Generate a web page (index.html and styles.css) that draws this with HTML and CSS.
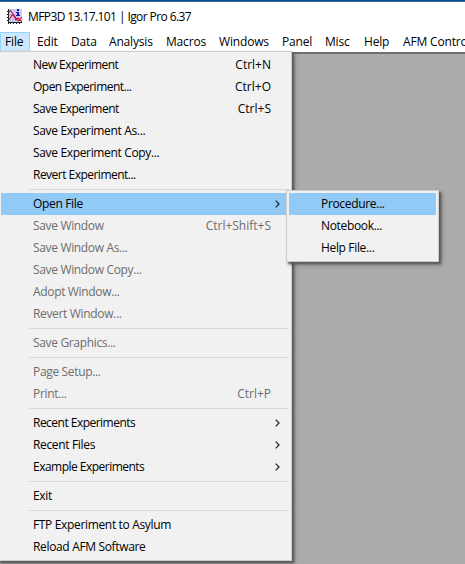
FILE: index.html
```html
<!DOCTYPE html>
<html lang="en">
<head>
<meta charset="utf-8">
<title>MFP3D 13.17.101 | Igor Pro 6.37</title>
<link rel="stylesheet" href="styles.css">
</head>
<body>
<div class="window">
  <header class="titlebar">
    <svg class="app-icon" width="16" height="16" viewBox="0 0 16 16" shape-rendering="crispEdges">
      <path fill="#c9c9f5" d="M2 0h13v13H2z"/>
      <path fill="#222" d="M1 0h1v15H1zM2 13h13v1H2zM0 2h1v1H0zM0 5h1v1H0zM0 8h1v1H0zM0 11h1v1H0zM3 14h1v1H3zM6 14h1v1H6zM9 14h1v1H9zM12 14h1v1h-1z"/>
      <path fill="none" stroke="#cc1838" stroke-width="1.1" shape-rendering="auto" d="M2 3l1.500-1.500L6 5l3 4 2.500 3L15 8M2 11l3-5 2 1 2 4 2-2 4 3.500"/>
      <path fill="#1818b0" d="M10 0h2v2h-2zM9 3h3v3h1v1H9V6h1V4H9z"/>
    </svg>
    <h1 class="title">MFP3D 13.17.101 | Igor Pro 6.37</h1>
  </header>
  <nav class="menubar">
    <span class="tab file active">File</span>
    <span class="tab edit">Edit</span>
    <span class="tab data">Data</span>
    <span class="tab analysis">Analysis</span>
    <span class="tab macros">Macros</span>
    <span class="tab windows">Windows</span>
    <span class="tab panel">Panel</span>
    <span class="tab misc">Misc</span>
    <span class="tab help">Help</span>
    <span class="tab afm">AFM Controls</span>
  </nav>
  <main class="workspace"></main>

  <div class="menu file-menu">
    <div class="item tight"><span>New Experiment</span><kbd>Ctrl+N</kbd></div>
    <div class="item tight"><span>Open Experiment...</span><kbd>Ctrl+O</kbd></div>
    <div class="item tight"><span>Save Experiment</span><kbd>Ctrl+S</kbd></div>
    <div class="item"><span>Save Experiment As...</span></div>
    <div class="item"><span>Save Experiment Copy...</span></div>
    <div class="item tight"><span>Revert Experiment...</span></div>
    <hr>
    <div class="item selected"><span>Open File</span><svg class="arrow" viewBox="0 0 5 8"><path d="M.7 .7L4 4 .7 7.300"/></svg></div>
    <div class="item disabled"><span>Save Window</span><kbd>Ctrl+Shift+S</kbd></div>
    <div class="item disabled"><span>Save Window As...</span></div>
    <div class="item disabled"><span>Save Window Copy...</span></div>
    <div class="item disabled"><span>Adopt Window...</span></div>
    <div class="item disabled"><span>Revert Window...</span></div>
    <hr>
    <div class="item disabled"><span>Save Graphics...</span></div>
    <hr>
    <div class="item disabled"><span>Page Setup...</span></div>
    <div class="item disabled"><span>Print...</span><kbd>Ctrl+P</kbd></div>
    <hr>
    <div class="item tight"><span>Recent Experiments</span><svg class="arrow" viewBox="0 0 5 8"><path d="M.7 .7L4 4 .7 7.300"/></svg></div>
    <div class="item"><span>Recent Files</span><svg class="arrow" viewBox="0 0 5 8"><path d="M.7 .7L4 4 .7 7.300"/></svg></div>
    <div class="item tight"><span>Example Experiments</span><svg class="arrow" viewBox="0 0 5 8"><path d="M.7 .7L4 4 .7 7.300"/></svg></div>
    <hr>
    <div class="item"><span>Exit</span></div>
    <hr>
    <div class="item"><span>FTP Experiment to Asylum</span></div>
    <div class="item"><span>Reload AFM Software</span></div>
  </div>

  <div class="menu submenu">
    <div class="item selected"><span>Procedure...</span></div>
    <div class="item"><span>Notebook...</span></div>
    <div class="item"><span>Help File...</span></div>
  </div>
</div>
</body>
</html>
```
FILE: styles.css
```css
* { box-sizing: border-box; }
body {
  margin: 0;
  overflow: hidden;
  font: 12px/22px "Open Sans", "Noto Sans", sans-serif;
  letter-spacing: -0.17px;
  color: #000;
}
.window {
  position: relative;
  display: flex;
  flex-direction: column;
  height: 564px;
  overflow: hidden;
  background: #fff;
  border-top: 1px solid #00508f;
  box-shadow: inset 0 1px #40698c;
}
.titlebar { display: flex; align-items: center; height: 31px; padding-left: 7px; }
.app-icon { margin-right: 5px; }
.title { margin: 0; font-size: 12px; font-weight: 400; line-height: 16px; letter-spacing: -0.59px; }
.menubar { display: flex; height: 20px; line-height: 20px; white-space: nowrap; }
.tab { flex: none; padding-left: 7px; }
.active { padding-left: 5px; background: #cce8ff; box-shadow: inset 0 0 0 1px #99d1ff; }
.file { width: 30px; }
.edit { width: 34px; }
.data { width: 38px; }
.analysis { width: 57px; }
.macros { width: 53px; }
.windows { width: 63px; }
.panel { width: 43px; }
.misc { width: 39px; }
.help { width: 39px; }
.workspace { flex: 1; background: #ababab; border-top: 2px solid #707070; }
.menu {
  position: absolute;
  background: #f1f1f1;
  border: 1px solid #ccc;
  padding: 2px;
  box-shadow: 2px 2px 2px #585858, 3px 3px 4px rgba(0, 0, 0, .25);
}
.file-menu { left: -2px; top: 50px; width: 294px; height: 510px; }
.submenu { left: 286px; top: 189px; width: 153px; height: 72px; }
.item { display: flex; align-items: center; height: 22px; padding-left: 32px; white-space: nowrap; letter-spacing: -0.34px; }
.item.tight { letter-spacing: -0.52px; }
.item kbd { margin-left: auto; margin-right: 18px; font: inherit; letter-spacing: 0; }
.selected { background: #91c9f7; }
.disabled { color: #6d6d6d; }
.arrow { width: 5px; height: 8px; margin-left: auto; margin-right: 9px; fill: none; stroke: #222; stroke-width: 1.2; }
hr { height: 1px; margin: 3px 0 3px 28px; border: 0; background: #d7d7d7; }
```
